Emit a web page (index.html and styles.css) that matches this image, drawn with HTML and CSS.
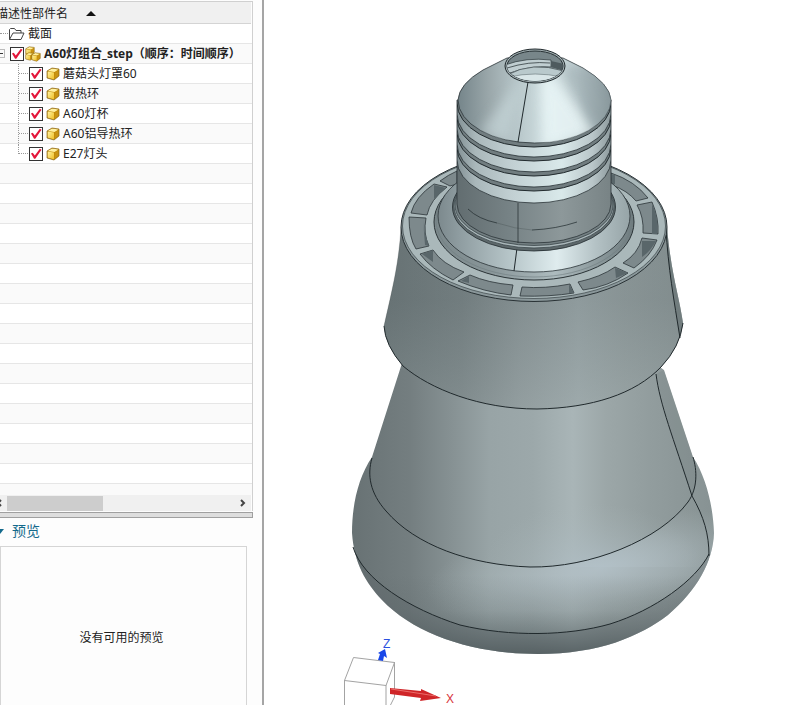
FILE: index.html
```html
<!DOCTYPE html>
<html lang="zh-CN">
<head>
<meta charset="utf-8">
<title>A60灯组合_step</title>
<link rel="stylesheet" href="styles.css">
</head>
<body>
<svg class="defs" aria-hidden="true">
  <defs>
    <linearGradient id="gold" x1="0" y1="0" x2="1" y2="1"><stop offset="0" stop-color="#fff3a0"/><stop offset="1" stop-color="#efbd25"/></linearGradient>
    <symbol id="part" viewBox="0 0 14 14">
      <path d="M1 4 6 1l7 1v7l-5 4-7-2z" fill="#c18a08"/>
      <path d="M1.500 4 6 1.400l6.500 1L8.500 5z" fill="#fff0a0"/>
      <path d="M1.500 4.500 8 5.500v7L1.500 10.600z" fill="url(#gold)"/>
      <path d="M8.700 5.400 12.600 2.800v6L8.700 12z" fill="#c99312"/>
      <path d="M1 4 6 1l7 1v7l-5 4-7-2z" fill="none" stroke="#8d6b1c" stroke-width=".7"/>
    </symbol>
  </defs>
</svg>
<aside class="sidebar">
  <section class="navigator">
    <header class="column-head"><span>描述性部件名</span><i class="sort"></i></header>
    <ul class="tree">
      <li class="row section-row"><i class="link"></i>
        <svg class="folder" viewBox="0 0 17 14"><path d="M1.500 12.500v-10l1-1h4l1.500 2h5v2.500M1.500 12.500l3.500-6.500h11l-3 6.500z" fill="#fff" stroke="#444"/></svg><span>截面</span></li>
      <li class="row root"><i class="expander"></i><label><input type="checkbox" checked>
        <svg class="assembly" viewBox="0 0 16 16"><use href="#part" x="0" y="0" width="10" height="10"/><use href="#part" x="0" y="6" width="9" height="9"/><use href="#part" x="6" y="6" width="10" height="10"/></svg><span>A60灯组合_step（顺序：时间顺序）</span></label></li>
      <li class="row child"><i class="branch"></i><label><input type="checkbox" checked><svg class="part"><use href="#part"/></svg><span>蘑菇头灯罩60</span></label></li>
      <li class="row child"><i class="branch"></i><label><input type="checkbox" checked><svg class="part"><use href="#part"/></svg><span>散热环</span></label></li>
      <li class="row child"><i class="branch"></i><label><input type="checkbox" checked><svg class="part"><use href="#part"/></svg><span>A60灯杯</span></label></li>
      <li class="row child"><i class="branch"></i><label><input type="checkbox" checked><svg class="part"><use href="#part"/></svg><span>A60铝导热环</span></label></li>
      <li class="row child last"><i class="branch"></i><label><input type="checkbox" checked><svg class="part"><use href="#part"/></svg><span>E27灯头</span></label></li>
      <li class="row"></li><li class="row"></li><li class="row"></li><li class="row"></li>
      <li class="row"></li><li class="row"></li><li class="row"></li><li class="row"></li>
      <li class="row"></li><li class="row"></li><li class="row"></li><li class="row"></li>
      <li class="row"></li><li class="row"></li><li class="row"></li><li class="row"></li><li class="row"></li>
    </ul>
    <div class="scrollbar">
      <button class="arrow" aria-label="向左滚动"><svg viewBox="0 0 7 8"><path d="M5 1 2 4l3 3" fill="none" stroke="#444" stroke-width="2"/></svg></button>
      <div class="thumb"></div>
      <button class="arrow" aria-label="向右滚动"><svg viewBox="0 0 7 8"><path d="M2 1l3 3-3 3" fill="none" stroke="#444" stroke-width="2"/></svg></button>
    </div>
  </section>
  <div class="splitter"></div>
  <section class="preview">
    <h2><i class="caret"></i>预览</h2>
    <div class="preview-box">没有可用的预览</div>
  </section>
</aside>
<main class="viewport">
<svg class="model" viewBox="264 0 542 705" preserveAspectRatio="xMinYMin meet" role="img" aria-label="A60灯组合">
  <defs>
    <linearGradient id="body" gradientUnits="userSpaceOnUse" x1="352" x2="714" y1="0" y2="0">
      <stop offset="0" stop-color="#687274"/><stop offset=".16" stop-color="#747e80"/><stop offset=".28" stop-color="#879294"/><stop offset=".38" stop-color="#98a4a6"/><stop offset=".5" stop-color="#9ca8aa"/><stop offset=".61" stop-color="#a9b5b7"/><stop offset=".7" stop-color="#9ca7a8"/><stop offset=".82" stop-color="#929d9e"/><stop offset="1" stop-color="#879293"/>
    </linearGradient>
    <linearGradient id="collar" gradientUnits="userSpaceOnUse" x1="384" x2="683" y1="0" y2="0">
      <stop offset="0" stop-color="#687375"/><stop offset=".26" stop-color="#768183"/><stop offset=".45" stop-color="#8c9799"/><stop offset=".65" stop-color="#9ba7a9"/><stop offset=".8" stop-color="#939e9f"/><stop offset="1" stop-color="#8a9596"/>
    </linearGradient>
    <linearGradient id="collarShade" x1="0" y1="0" x2="0" y2="1"><stop offset=".4" stop-color="#626e70" stop-opacity=".22"/><stop offset="1" stop-color="#a5b1b2" stop-opacity=".25"/></linearGradient>
    <radialGradient id="bulge" gradientUnits="userSpaceOnUse" cx="0" cy="0" r="1" gradientTransform="translate(600 568) rotate(-8) scale(175 55)"><stop offset="0" stop-color="#b3c1c8" stop-opacity=".9"/><stop offset=".5" stop-color="#b0bdc2" stop-opacity=".5"/><stop offset="1" stop-color="#a7b4b6" stop-opacity="0"/></radialGradient>
    <radialGradient id="halo" gradientUnits="userSpaceOnUse" cx="0" cy="0" r="1" gradientTransform="translate(592 568) scale(110 65)"><stop offset="0" stop-color="#b1c0c8" stop-opacity=".75"/><stop offset="1" stop-color="#a7b4b6" stop-opacity="0"/></radialGradient>
    <linearGradient id="under" gradientUnits="userSpaceOnUse" x1="0" x2="0" y1="575" y2="654"><stop offset="0" stop-color="#586365" stop-opacity="0"/><stop offset=".45" stop-color="#586365" stop-opacity=".2"/><stop offset="1" stop-color="#4a5557" stop-opacity=".8"/></linearGradient>
    <linearGradient id="cone" gradientUnits="userSpaceOnUse" x1="458" x2="611" y1="0" y2="0"><stop offset="0" stop-color="#75858a"/><stop offset=".2" stop-color="#9aa7aa"/><stop offset=".4" stop-color="#b9c8cb"/><stop offset=".58" stop-color="#d0dfe1"/><stop offset=".78" stop-color="#bfcdd0"/><stop offset="1" stop-color="#818f93"/></linearGradient>
    <linearGradient id="thread" gradientUnits="userSpaceOnUse" x1="457" x2="611" y1="0" y2="0"><stop offset="0" stop-color="#839195"/><stop offset=".12" stop-color="#a9b7ba"/><stop offset=".35" stop-color="#c1cfd2"/><stop offset=".68" stop-color="#d9e9ea"/><stop offset=".88" stop-color="#b9c6c9"/><stop offset="1" stop-color="#8d9a9d"/></linearGradient>
    <linearGradient id="neck" gradientUnits="userSpaceOnUse" x1="457" x2="611" y1="0" y2="0"><stop offset="0" stop-color="#626d70"/><stop offset=".35" stop-color="#778386"/><stop offset=".68" stop-color="#8d989a"/><stop offset="1" stop-color="#788385"/></linearGradient>
    <linearGradient id="dome" gradientUnits="userSpaceOnUse" x1="438" x2="630" y1="0" y2="0"><stop offset="0" stop-color="#7c898d"/><stop offset=".12" stop-color="#909ea2"/><stop offset=".4" stop-color="#bac9cc"/><stop offset=".62" stop-color="#dfecee"/><stop offset=".82" stop-color="#b4c2c5"/><stop offset="1" stop-color="#96a4a7"/></linearGradient>
    <linearGradient id="torus" gradientUnits="userSpaceOnUse" x1="434" x2="634" y1="0" y2="0"><stop offset="0" stop-color="#7a878a"/><stop offset=".3" stop-color="#8a979a"/><stop offset=".6" stop-color="#adbbbe"/><stop offset="1" stop-color="#6f7c7f"/></linearGradient>
    <filter id="soft" x="-30%" y="-30%" width="160%" height="160%"><feGaussianBlur stdDeviation="6"/></filter>
    <clipPath id="coneClip"><path d="M507 58 483 70Q459 84 458 100A76.500 43 0 0 0 611 100Q610 84 583 68L563 58z"/></clipPath>
    <clipPath id="neckClip"><path d="M457 100V205A77 39 0 0 0 611 205V100z"/></clipPath>
    <clipPath id="holeClip"><ellipse cx="535" cy="66" rx="28" ry="15"/></clipPath>
    <clipPath id="shellClip"><path d="M403 360 372 457C358 478 352 505 352 533 354 563 366 583 382 600 415 635 475 654 538 654 600 654 640 636 668 615 697 590 713 562 714 533 713 505 706 477 693 457L664 370 650 360z"/></clipPath>
  </defs>

  <!-- diffuser -->
  <g clip-path="url(#shellClip)">
    <path d="M345 350H720V660H345z" fill="url(#body)"/>
    <path d="M345 500H720V567H345z" fill="url(#halo)"/>
    <path d="M372 458C367 475 370 493 386 511 415 545 470 565 530 567 590 568 660 540 688 502 698 488 697 470 693 457L720 450V660H345V458z" fill="url(#bulge)"/>
    <path d="M345 567H720V660H345z" fill="url(#under)"/>
    <path d="M353 547C363 580 410 609 460 625 510 637 568 636 610 624 655 610 696 580 709 554L720 660H345z" fill="#4e595b" opacity=".25"/>
    <path d="M656 374 667 420 692 496 696 477 693 457 664 370z" fill="#6f7b7c" opacity=".25"/>
  </g>
  <g class="edge">
    <path d="M372 458C367 475 370 493 386 511 415 545 470 565 530 567 590 568 660 540 688 502 698 488 697 470 693 457"/>
    <path d="M353 547C363 580 410 609 460 625 510 637 568 636 610 624 655 610 696 580 709 554"/>
    <path d="M656 374C660 405 673 437 692 496 704 517 709 534 709 556"/>
  </g>

  <!-- heat-sink collar -->
  <path d="M401 227C399 264 392 290 384 326Q385 345 403 366C430 389 480 409 537 409 592 408 635 394 661 367Q680 347 683 323C679 295 671 274 667 227z" fill="url(#collar)"/>
  <path d="M401 227C399 264 392 290 384 326Q385 345 403 366C430 389 480 409 537 409 592 408 635 394 661 367Q680 347 683 323C679 295 671 274 667 227z" fill="url(#collarShade)"/>
  <path d="M666 228C668 268 674 300 680 338L683 323C679 295 671 274 667 227z" fill="#667173" opacity=".6"/>
  <g class="edge">
    <path d="M384 326Q385 345 403 366C430 389 480 409 537 409 592 408 635 394 661 367Q680 347 683 323"/>
    <path d="M666 228C668 268 674 300 680 338"/>
  </g>
  <path d="M401 227C399 264 392 290 384 326" class="edge faint"/>
  <ellipse cx="534" cy="227" rx="133" ry="74.500" fill="#8a979a" stroke="#293235"/>
  <ellipse cx="534" cy="226" rx="131.500" ry="72.500" fill="#aab8ba" stroke="#3b4548" stroke-width=".7"/>
  <g class="slots">
    <path d="M440 181Q448 175 457 171V184L450 186z"/>
    <path d="M411 213Q415 197 434 184L447 187Q430 200 427 215z"/>
    <path d="M409 217 426 218Q423 234 429 246L416 249Q409 238 409 217z"/>
    <path d="M420 254 433 250Q442 264 464 272L453 280Q431 269 420 254z"/>
    <path d="M458 281 470 275Q488 283 513 285L511 295Q484 292 458 281z"/>
    <path d="M522 287Q545 289 570 284L574 293Q549 297 520 296z"/>
    <path d="M578 282Q601 277 615 267L628 273Q608 287 583 290z"/>
    <path d="M623 263Q638 254 642 238L657 240Q651 256 634 268z"/>
    <path d="M637 205 652 202Q659 218 658 234L643 233Q644 217 637 205z"/>
    <path d="M611 173Q635 181 648 198L636 201Q628 191 612 185z"/>
  </g>
  <g class="slot-wall">
    <path d="M434 185V199L446 188zM423 219 425 245 429 246 424 230zM422 254 433 262V250zM461 281 469 283V276zM569 284V293H574zM615 268 616 278 628 273zM642 241V257Q650 252 656 241zM652 204V234H657Q659 218 652 204zM611 174 615 175V184L612 185z"/>
  </g>

  <!-- domed ring -->
  <ellipse cx="534" cy="222" rx="100" ry="58" fill="url(#torus)" stroke="#2b3437"/>
  <ellipse cx="534" cy="220" rx="98" ry="57" fill="url(#torus)" stroke="#6f7c7f" stroke-width=".6"/>
  <ellipse cx="534" cy="216" rx="96" ry="56" fill="url(#dome)" stroke="#2b3437" stroke-width=".8"/>
  <path d="M517 248 514 271" class="edge"/>
  <ellipse cx="534" cy="207" rx="81.500" ry="44" fill="#5d686b" stroke="#222b2e" stroke-width=".8"/>
  <ellipse cx="534" cy="206" rx="80" ry="42" fill="#a9b6b9" stroke="#3b464a" stroke-width=".8"/>
  <ellipse cx="534" cy="205" rx="79" ry="40.500" fill="#748083" stroke="#3b464a" stroke-width=".8"/>

  <!-- neck and threads -->
  <path d="M457 100V204A77 39 0 0 0 611 204V100z" fill="url(#neck)" stroke="#2b3437" stroke-width=".8"/>
  <g clip-path="url(#neckClip)">
    <path d="M457 100V160A77 43 0 0 0 611 160V100z" fill="url(#thread)" stroke="#273033" stroke-width=".8"/>
    <path d="M457 100V148A77 43 0 0 0 611 148V100z" fill="#717d80" stroke="#222b2e"/>
    <path d="M457 100V144A77 43 0 0 0 611 144V100z" fill="url(#thread)" stroke="#222b2e" stroke-width=".8"/>
    <path d="M457 100V133A77 43 0 0 0 611 133V100z" fill="#717d80" stroke="#222b2e"/>
    <path d="M457 100V129A77 43 0 0 0 611 129V100z" fill="url(#thread)" stroke="#222b2e" stroke-width=".8"/>
    <path d="M457 100V118A77 43 0 0 0 611 118V100z" fill="#717d80" stroke="#222b2e"/>
    <path d="M457 100V114A77 43 0 0 0 611 114V100z" fill="url(#thread)" stroke="#222b2e" stroke-width=".8"/>
    <path d="M457 98V103A77 44 0 0 0 611 103V98z" fill="#717d80" stroke="#222b2e"/>
  </g>
  <path d="M518 203V243M468 209Q478 219 497 223M532 230Q556 229 577 222" class="edge thin"/>
  <path d="M497 223Q515 229 532 230" class="edge faint"/>

  <!-- contact cone -->
  <path d="M507 58 483 70Q459 84 458 100A76.500 43 0 0 0 611 100Q610 84 583 68L563 58z" fill="url(#cone)" stroke="#2b3437" stroke-width=".8"/>
  <g clip-path="url(#coneClip)">
    <path d="M541 78 543 150 596 132 552 74z" fill="#edf9fa" opacity=".75" filter="url(#soft)"/>
    <path d="M520 80 480 132 508 143z" fill="#cbdbde" opacity=".6" filter="url(#soft)"/>
    <path d="M562 67 594 132 625 105 590 65z" fill="#93a3a7" opacity=".5" filter="url(#soft)"/>
  </g>
  <path d="M528 82 518 142" class="edge"/>
  <ellipse cx="535" cy="66" rx="30" ry="17" fill="#a4b1b4" stroke="#1e272a"/>
  <ellipse cx="535" cy="66" rx="28" ry="15" fill="#78868a" stroke="#263033"/>
  <g clip-path="url(#holeClip)">
    <path d="M505 65Q526 57 551 60V67Q530 65 507 74z" fill="#c0ced1" stroke="#394448" stroke-width=".8"/>
    <path d="M507 68Q529 61 550 63" class="edge thin"/>
    <path d="M551 61 564 64V71L551 67z" fill="#4e5a5e"/>
    <path d="M507 75Q532 61 564 71V84H507z" fill="#b9c9cc" stroke="#475256" stroke-width=".8"/>
    <path d="M509 77Q535 71 562 77L548 84H520z" fill="#d9e6e8" stroke="#657276" stroke-width=".6"/>
  </g>

  <!-- orientation triad -->
  <g fill="none" stroke="#a3a3a3">
    <path d="M353.500 657.500 394.500 662.500 386 685.500 344.500 680.500zM344.500 680V706M386 685V706M394.500 662V697L390 706"/>
  </g>
  <path d="M378 660 380 654 378 653 385 649 387 658 384 656 383 661z" fill="#1846e8"/>
  <path d="M390 688 421 691 421 689 441 698 420 701 421 698 390 694z" fill="#cf2528"/>
  <path d="M391 689 436 696" stroke="#ec6b68" fill="none"/>
  <text x="383" y="648" class="axis-z">Z</text>
  <text x="446" y="703" class="axis-x">X</text>
</svg>
</main>
</body>
</html>
```
FILE: styles.css
```css
* { box-sizing: border-box; }

body {
  display: flex;
  height: 100vh;
  margin: 0;
  overflow: hidden;
  background: #fff;
  color: #222;
  font: 12px/20px "Noto Sans", "Noto Sans CJK SC", sans-serif;
}

.defs { position: absolute; width: 0; height: 0; }

.sidebar {
  display: flex;
  flex: none;
  flex-direction: column;
  width: 264px;
  padding-top: 1px;
  border-right: 2px solid #a5a5a5;
  background: #fdfdfd;
}

.navigator {
  width: 253px;
  border: solid #d0d0d0;
  border-width: 1px 1px 0 0;
}

.column-head {
  display: flex;
  align-items: center;
  gap: 18px;
  height: 22px;
  margin-right: 1px;
  padding-top: 2px;
  border-bottom: 1px solid #d4d4d4;
  background: #f0f0f0;
  white-space: nowrap;
}
.column-head span { margin-left: -4px; }
.sort {
  border: solid transparent;
  border-width: 0 5px 5px;
  border-bottom-color: #111;
}

.tree {
  height: 471px;
  margin: 0;
  padding: 0;
  overflow: hidden;
  list-style: none;
}
.row {
  display: flex;
  align-items: center;
  height: 20px;
  border-bottom: 1px solid #e6e6e6;
  background: #fff;
  white-space: nowrap;
}
.row:nth-child(even) { background: #fafafa; }
.row label { display: flex; align-items: center; }

.link { width: 8px; border-top: 1px dotted #999; }
.folder { width: 17px; height: 14px; margin-right: 3px; }

.expander {
  width: 5px;
  height: 9px;
  margin-right: 5px;
  border: 1px solid #bbb;
  border-left: 0;
  background: linear-gradient(#333, #333) 0 3px / 3px 1px no-repeat;
}
.root { font-family: "Open Sans", "Noto Sans CJK SC", sans-serif; font-weight: bold; }
.assembly { width: 16px; height: 16px; margin: 0 3px 0 1px; }

.branch {
  align-self: stretch;
  width: 11px;
  margin-left: 18px;
  border-left: 1px dotted #999;
  background: repeating-linear-gradient(90deg, #999 0 1px, #fff 1px 2px) 0 9px / 9px 1px no-repeat;
}
.last .branch { height: 10px; }
.part { width: 14px; height: 14px; margin: 0 3px; }

input {
  flex: none;
  width: 14px;
  height: 14px;
  margin: 0;
  border: 1px solid #333;
  background: #fff;
  appearance: none;
}
input:checked::before {
  display: block;
  width: 12px;
  height: 12px;
  background: #e3173b;
  clip-path: polygon(8% 50%, 23% 44%, 40% 67%, 82% 10%, 96% 18%, 44% 94%, 34% 94%);
  content: "";
}

.scrollbar {
  display: flex;
  align-items: center;
  height: 16px;
  margin-right: 1px;
  background: #f0f0f0;
}
.arrow {
  display: flex;
  width: 7px;
  padding: 0;
  border: 0;
  background: none;
}
.arrow:first-child { margin-left: -4px; margin-right: 4px; }
.arrow:last-child { margin-left: auto; margin-right: 5px; }
.arrow svg { width: 7px; height: 8px; }
.thumb { width: 96px; height: 15px; background: #cdcdcd; }

.splitter {
  width: 253px;
  height: 6px;
  margin-top: 1px;
  border: solid #a0a0a0;
  border-width: 1px 1px 1px 0;
  background: #dedede;
}

.preview { display: flex; flex: 1; flex-direction: column; }
h2 {
  display: flex;
  align-items: center;
  gap: 8px;
  height: 28px;
  margin: 0;
  padding-bottom: 2px;
  color: #146a8c;
  font-size: 14px;
  font-weight: normal;
}
.caret {
  margin-left: -4px;
  border: solid transparent;
  border-width: 5px 4px 0;
  border-top-color: #146a8c;
}
.preview-box {
  display: flex;
  flex: 1;
  align-items: center;
  justify-content: center;
  width: 247px;
  padding: 24px 4px 0 0;
  border: 1px solid #d5d5d5;
  border-bottom: 0;
}

.viewport { flex: 1; min-width: 0; }
.model { display: block; width: 100%; height: 100%; }
.edge { fill: none; stroke: #20292c; stroke-width: 1; }
.thin { stroke-width: .7; }
.faint { stroke-width: .7; opacity: .3; }
.slots { fill: #7d898c; stroke: #2c3538; stroke-width: .8; }
.slot-wall { fill: #59666a; }
.axis-z, .axis-x { font: 12px "Liberation Sans", sans-serif; }
.axis-z { fill: #2a50e0; }
.axis-x { fill: #d8343c; }
```
